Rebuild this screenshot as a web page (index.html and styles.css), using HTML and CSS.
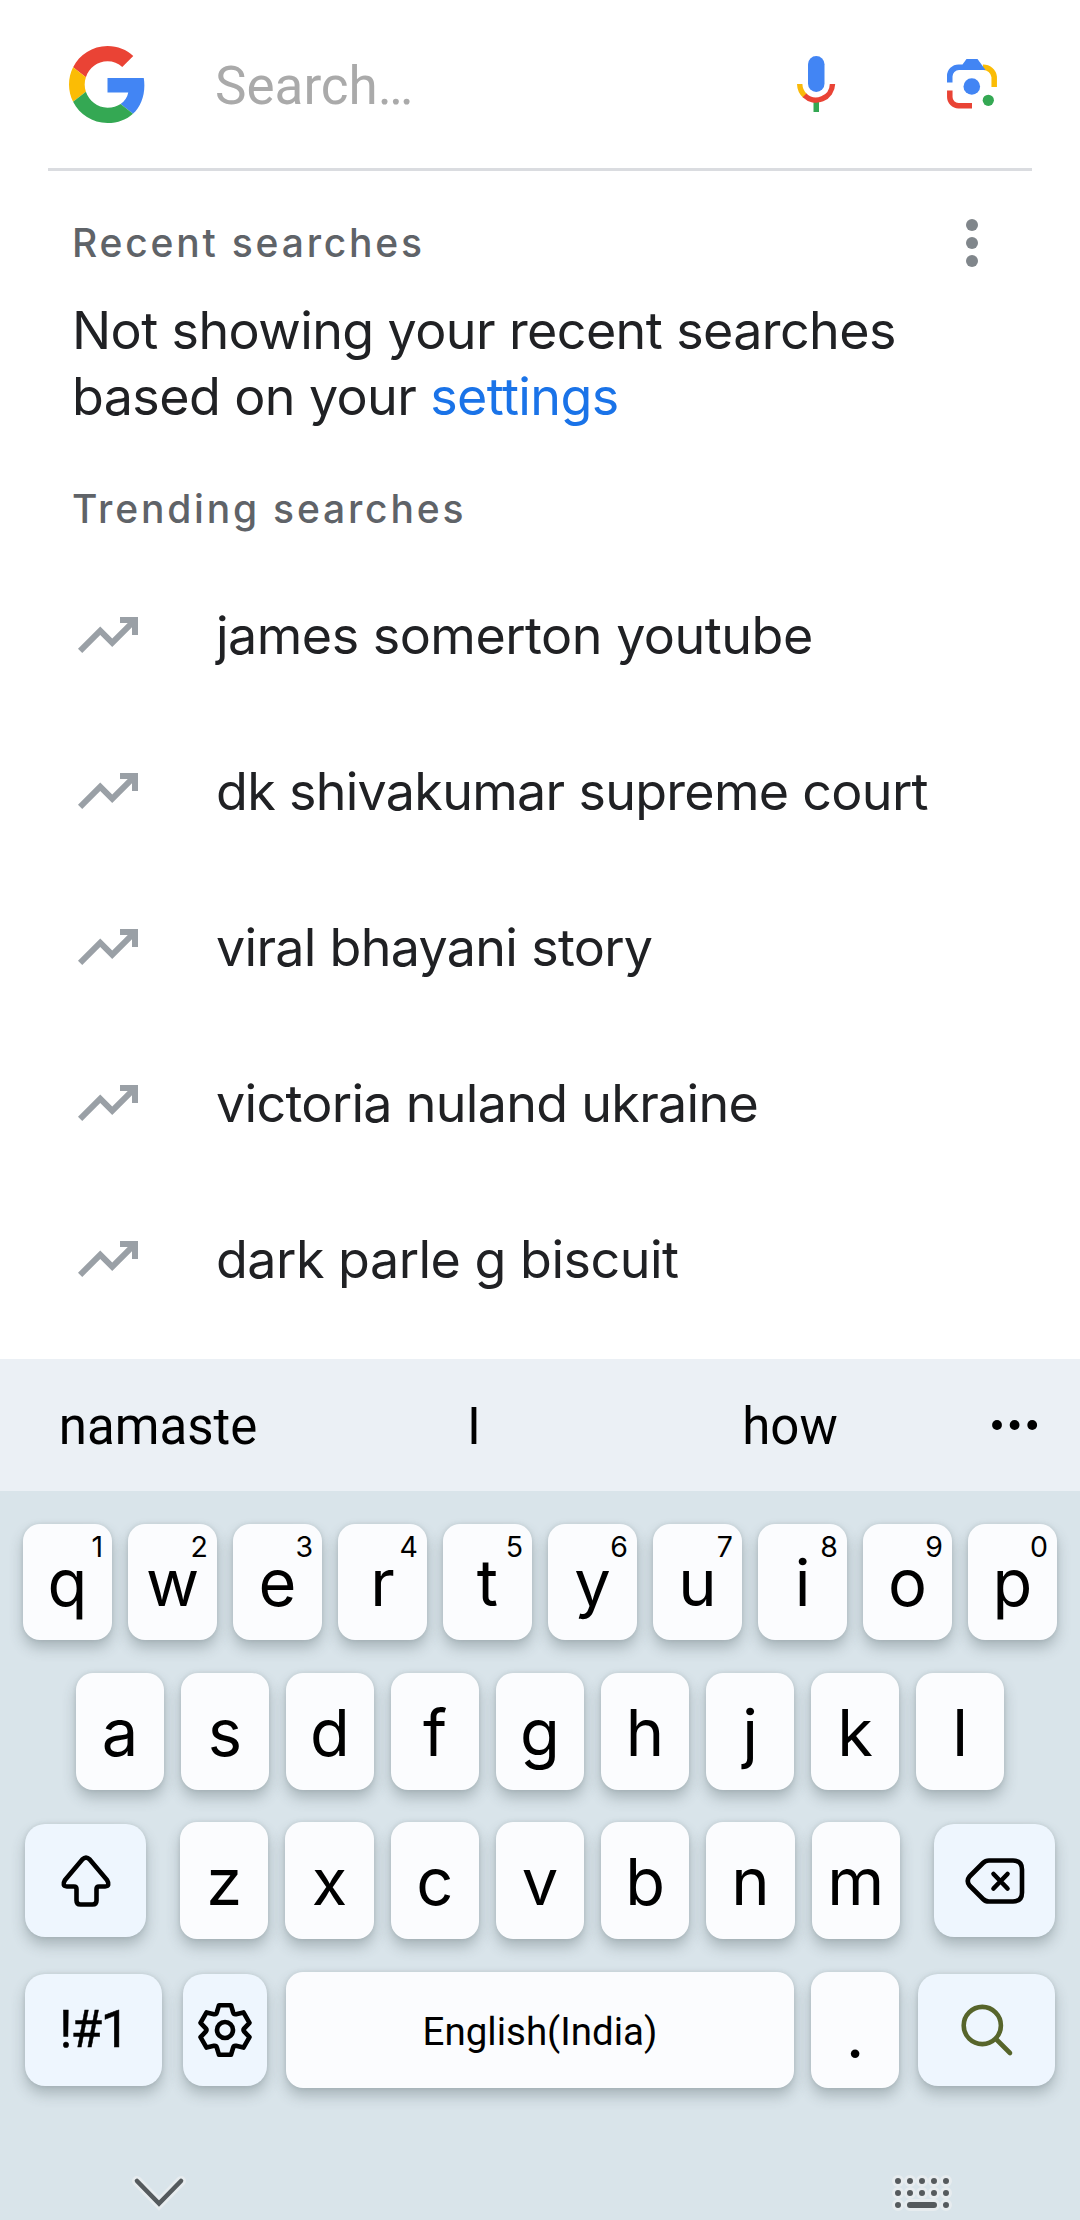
FILE: index.html
```html
<!DOCTYPE html>
<html lang="en">
<head>
<meta charset="utf-8">
<title>Search</title>
<link rel="stylesheet" href="styles.css">
</head>
<body>
<header class="searchbar">
  <svg class="logo" viewBox="0 0 48 48"><path fill="#EA4335" d="M24 9.5c3.54 0 6.71 1.22 9.21 3.6l6.85-6.85C35.9 2.38 30.47 0 24 0 14.62 0 6.51 5.38 2.56 13.22l7.98 6.19C12.43 13.72 17.74 9.5 24 9.5z"/><path fill="#4285F4" d="M46.98 24.55c0-1.57-.15-3.09-.38-4.55H24v9.02h12.94c-.58 2.96-2.26 5.48-4.78 7.18l7.73 6c4.51-4.18 7.09-10.36 7.09-17.65z"/><path fill="#FBBC05" d="M10.53 28.59c-.48-1.45-.76-2.99-.76-4.59s.27-3.14.76-4.59l-7.98-6.19C.92 16.46 0 20.12 0 24c0 3.88.92 7.54 2.56 10.78l7.97-6.19z"/><path fill="#34A853" d="M24 48c6.48 0 11.93-2.13 15.89-5.81l-7.73-6c-2.15 1.45-4.92 2.3-8.16 2.3-6.26 0-11.57-4.22-13.47-9.91l-7.98 6.19C6.51 42.62 14.62 48 24 48z"/></svg>
  <span class="placeholder">Search…</span>
  <svg class="mic" viewBox="0 0 38 56"><rect x="11" y="0" width="16.500" height="36" rx="8.250" fill="#4285F4"/><path d="M16.500 46h5.500v10h-5.500z" fill="#34A853"/><path d="M2.700 28a16.500 16.500 0 0 0 5.300 11.800" fill="none" stroke="#F9B90A" stroke-width="5.400"/><path d="M7.500 39.400A16.500 16.500 0 0 0 35.500 28" fill="none" stroke="#E94335" stroke-width="5.400"/></svg>
  <svg class="lens" viewBox="0 0 50 50"><path d="M36 8.300a11 11 0 0 1 11.200 9.500V28" fill="none" stroke="#FBBC05" stroke-width="5.500"/><path d="M0 23.500V17A11.500 11.500 0 0 1 11.500 5.500H15.500L19.500 0H30.500L38.500 11H12A6.500 6.500 0 0 0 5.500 17.500V23.500z" fill="#4285F4"/><path d="M2.800 31.500V38A8.700 8.700 0 0 0 11.500 46.700H25" fill="none" stroke="#E94335" stroke-width="5.500"/><circle cx="24.800" cy="27.500" r="8.300" fill="#4285F4"/><circle cx="41.300" cy="41.300" r="5.600" fill="#34A853"/></svg>
</header>
<main class="content">
  <div class="heading-row">
    <h2 class="heading">Recent searches</h2>
    <svg class="more" viewBox="0 0 12 48"><g fill="#80868B"><circle cx="6" cy="6" r="6"/><circle cx="6" cy="24" r="6"/><circle cx="6" cy="42" r="6"/></g></svg>
  </div>
  <p class="notice">Not showing your recent searches<br>based on your <a class="link">settings</a></p>
  <h2 class="heading trending-heading">Trending searches</h2>
  <ul class="trends">
    <li class="trend snug"><svg class="trend-icon" viewBox="2 6 20 12"><path d="M16 6v2h2.590l-5.180 5.170-4-4L2 16.590 3.410 18l6-6 4 4L20 9.410V12h2V6z"/></svg><span>james somerton youtube</span></li>
    <li class="trend"><svg class="trend-icon" viewBox="2 6 20 12"><path d="M16 6v2h2.590l-5.180 5.170-4-4L2 16.590 3.410 18l6-6 4 4L20 9.410V12h2V6z"/></svg><span>dk shivakumar supreme court</span></li>
    <li class="trend"><svg class="trend-icon" viewBox="2 6 20 12"><path d="M16 6v2h2.590l-5.180 5.170-4-4L2 16.590 3.410 18l6-6 4 4L20 9.410V12h2V6z"/></svg><span>viral bhayani story</span></li>
    <li class="trend"><svg class="trend-icon" viewBox="2 6 20 12"><path d="M16 6v2h2.590l-5.180 5.170-4-4L2 16.590 3.410 18l6-6 4 4L20 9.410V12h2V6z"/></svg><span>victoria nuland ukraine</span></li>
    <li class="trend snug"><svg class="trend-icon" viewBox="2 6 20 12"><path d="M16 6v2h2.590l-5.180 5.170-4-4L2 16.590 3.410 18l6-6 4 4L20 9.410V12h2V6z"/></svg><span>dark parle g biscuit</span></li>
  </ul>
</main>
<div class="suggestions">
  <span class="suggestion">namaste</span><span class="suggestion">I</span><span class="suggestion">how</span>
  <svg class="dots" viewBox="0 0 46 10"><circle cx="5" cy="5" r="4.900"/><circle cx="22.600" cy="5" r="4.900"/><circle cx="40.200" cy="5" r="4.900"/></svg>
</div>
<div class="keyboard">
  <div class="row row-1">
    <div class="key">q<span class="alt">1</span></div><div class="key">w<span class="alt">2</span></div><div class="key">e<span class="alt">3</span></div><div class="key">r<span class="alt">4</span></div><div class="key">t<span class="alt">5</span></div><div class="key">y<span class="alt">6</span></div><div class="key">u<span class="alt">7</span></div><div class="key">i<span class="alt">8</span></div><div class="key">o<span class="alt">9</span></div><div class="key">p<span class="alt">0</span></div>
  </div>
  <div class="row row-2">
    <div class="key">a</div><div class="key">s</div><div class="key">d</div><div class="key">f</div><div class="key">g</div><div class="key">h</div><div class="key">j</div><div class="key">k</div><div class="key">l</div>
  </div>
  <div class="row row-3">
    <div class="key fn side"><svg width="50" height="52" viewBox="0 0 50 52"><path d="M21.300 4.500Q25 .8 28.700 4.500L46 25Q49.500 31 44 31.500H38Q35.500 31.500 35.500 34V45.500Q35.500 49.500 31.500 49.500H19.500Q15.500 49.500 15.500 45.500V34Q15.500 31.500 13 31.500H6Q.5 31 4 25Z" class="stroke"/></svg></div>
    <div class="letters"><div class="key">z</div><div class="key">x</div><div class="key">c</div><div class="key">v</div><div class="key">b</div><div class="key">n</div><div class="key">m</div></div>
    <div class="key fn side"><svg width="60" height="46" viewBox="0 0 60 46"><path d="M24 2.500H48Q57 2.500 57 11.500V34.500Q57 43.500 48 43.500H24Q20.500 43.500 18 41L4.500 27.500Q1 23 4.500 18.500L18 5Q20.500 2.500 24 2.500Z" class="stroke"/><path d="M28.500 16L42.500 30.500M42.500 16L28.500 30.500" class="stroke"/></svg></div>
  </div>
  <div class="row row-4">
    <div class="key fn symbols">!#1</div>
    <div class="key fn settings-key"><svg width="56" height="56" viewBox="-28 -28 56 56"><path class="stroke" d="M-6-24.800H6L8.200-17.500Q8.900-15.400 11.060-15.850L18.480-17.600 24.480-7.200 19.260-1.650Q17.800 0 19.260 1.650L24.480 7.200 18.480 17.600 11.060 15.850Q8.900 15.400 8.200 17.500L6 24.800H-6L-8.200 17.500Q-8.900 15.400-11.060 15.850L-18.480 17.600-24.480 7.200-19.260 1.650Q-17.800 0-19.260-1.650L-24.480-7.200-18.480-17.600-11.060-15.850Q-8.900-15.400-8.200-17.500Z"/><circle r="8" class="stroke"/></svg></div>
    <div class="key space">English(India)</div>
    <div class="key period">.</div>
    <div class="key fn search-key"><svg width="54" height="54" viewBox="0 0 54 54"><g fill="none" stroke="#57652B" stroke-width="4.600" stroke-linecap="round"><circle cx="22.300" cy="22.500" r="18.600"/><path d="M36.500 36.500L50 50"/></g></svg></div>
  </div>
  <div class="navbar">
    <svg width="54" height="36" viewBox="0 0 54 36"><path d="M5 6L27 28.500 49 6" fill="none" stroke="#E7ECEF" stroke-width="10" stroke-linecap="round"/><path d="M5 6L27 28.500 49 6" fill="none" stroke="#555A5D" stroke-width="4.600" stroke-linecap="round"/></svg>
    <svg width="60" height="36" viewBox="0 0 60 36"><g fill="none" stroke-linecap="round"><path d="M6 6h0M18 6h0M30 6h0M42 6h0M54 6h0M6 18h0M18 18h0M30 18h0M42 18h0M54 18h0M6 30h0M18 30H42M54 30h0" stroke="#E7ECEF" stroke-width="12"/><path d="M6 6h0M18 6h0M30 6h0M42 6h0M54 6h0M6 18h0M18 18h0M30 18h0M42 18h0M54 18h0M6 30h0M18 30H42M54 30h0" stroke="#555A5D" stroke-width="6"/></g></svg>
  </div>
</div>
</body>
</html>
```
FILE: styles.css
```css
* { box-sizing: border-box; }
body {
  margin: 0;
  width: 1080px;
  height: 2220px;
  overflow: hidden;
  background: #fff;
  color: #202124;
  font-family: Inter, "Liberation Sans", sans-serif;
}
h2, p, ul { margin: 0; padding: 0; font-weight: 400; }
svg { display: block; flex: none; overflow: visible; }

.searchbar {
  display: flex;
  align-items: center;
  height: 171px;
  margin: 0 48px;
  padding-right: 35px;
  border-bottom: 3px solid #dadce0;
}
.logo { width: 77px; height: 77px; margin-left: 21px; }
.placeholder {
  flex: 1;
  margin-left: 69px;
  padding-top: 4px;
  font: 53px/64px Roboto, sans-serif;
  color: #aaa;
}
.mic { width: 38px; height: 56px; }
.lens { width: 50px; height: 50px; margin-left: 112px; }

.content { height: 1188px; padding: 48px 0 0 72px; }
.heading-row { display: flex; justify-content: space-between; padding-right: 102px; }
.heading {
  font-size: 39px;
  line-height: 48px;
  font-weight: 500;
  letter-spacing: 2.8px;
  color: #5f6368;
}
.more { width: 12px; height: 48px; }
.notice { margin-top: 31px; font-size: 52px; line-height: 66px; letter-spacing: -0.6px; }
.link { color: #1a73e8; }
.trending-heading { margin-top: 55px; }
.trends { margin-top: 24px; list-style: none; }
.trend {
  display: flex;
  align-items: center;
  gap: 78px;
  height: 156px;
  padding-left: 6px;
  font-size: 52px;
  letter-spacing: -0.7px;
}
.snug { letter-spacing: -0.5px; }
.trend-icon { width: 60px; height: 36px; fill: #9aa0a6; }

.suggestions {
  display: flex;
  align-items: center;
  height: 132px;
  background: #ebf0f5;
  font: 51px/60px Roboto, sans-serif;
  color: #000;
}
.suggestion { width: 316px; padding-top: 3px; text-align: center; }
.dots { width: 46px; height: 10px; margin-left: 44px; }

.keyboard {
  height: 729px;
  padding-top: 33px;
  background: #d9e4ea;
  color: #000;
}
.row, .letters { display: flex; }
.row-1 { gap: 16px; padding: 0 23px; }
.row-2 { gap: 17px; padding: 0 76px; margin-top: 33px; }
.row-3 { align-items: center; padding: 0 25px; margin-top: 32px; justify-content: space-between; }
.letters { gap: 17px; width: 720px; }
.row-4 { align-items: center; padding: 0 25px; margin-top: 33px; }
.key {
  position: relative;
  display: flex;
  flex: 1;
  align-items: center;
  justify-content: center;
  height: 117px;
  padding-top: 2px;
  border-radius: 17px;
  background: #fbfcfe;
  font-size: 65px;
  line-height: 70px;
  box-shadow: 0 8px 14px rgba(60, 75, 80, 0.3), 0 0 4px rgba(60, 75, 80, 0.14);
}
.row-1 .key, .row-4 .key { height: 116px; }
.alt {
  position: absolute;
  top: 6px;
  right: 9px;
  font-size: 28.5px;
  line-height: 34px;
}
.fn { height: 113px; padding: 0; border-radius: 20px; background: #eef6fe; }
.row-4 .fn { height: 112px; }
.side { flex: none; width: 121px; }
.stroke { fill: none; stroke: #000; stroke-width: 4.6; stroke-linecap: round; stroke-linejoin: round; }
.symbols { flex: none; width: 137px; font: 51px/60px Roboto, sans-serif; letter-spacing: -1.5px; -webkit-text-stroke: 0.5px #000; }
.settings-key { flex: none; width: 84px; margin: 0 19px 0 21px; }
.space { flex: none; width: 508px; padding-top: 4px; font: 38.5px/44px Roboto, sans-serif; }
.period { flex: none; width: 88px; margin: 0 19px 0 17px; padding-top: 10px; }
.search-key { flex: none; width: 137px; }

.navbar {
  display: flex;
  justify-content: space-between;
  margin-top: 87px;
  padding: 0 128px 0 132px;
}
```
